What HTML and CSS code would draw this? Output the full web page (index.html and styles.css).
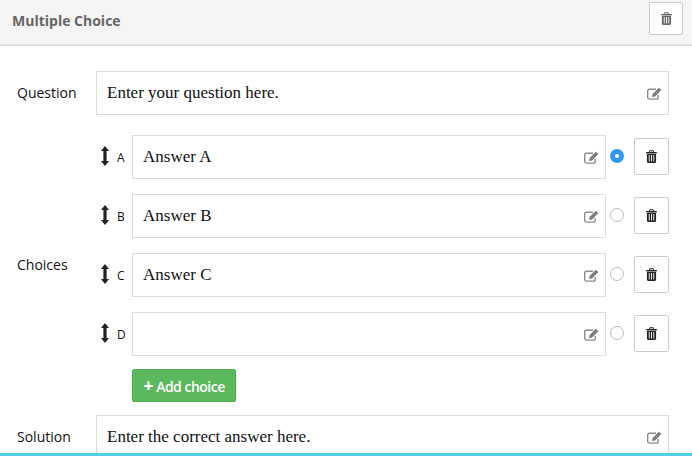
FILE: index.html
```html
<!DOCTYPE html>
<html lang="en">
<head>
    <meta charset="UTF-8">
    <meta name="viewport" content="width=device-width, initial-scale=1.0">
    <title>Multiple Choice</title>
    <link rel="stylesheet" href="styles.css">
</head>
<body>
    <svg class="icon-defs" width="0" height="0">
        <symbol id="trash" viewBox="0 0 12 14">
            <path fill-rule="evenodd" d="M4 0.3h4l0.9 1.7H11.4c0.3 0 0.6 0.2 0.6 0.6v0.9H0v-0.9c0-0.4 0.3-0.6 0.6-0.6H3.1zM4.5 1.2L4.1 2h3.8l-0.4-0.8zM1 4h10v8.4c0 0.9-0.6 1.6-1.4 1.6H2.4C1.6 14 1 13.3 1 12.4zM3 5.4v7h1v-7zM5.5 5.4v7h1v-7zM8 5.4v7h1v-7z"/>
        </symbol>
        <symbol id="edit" viewBox="0 0 15 13">
            <path fill="none" stroke="#8b8b8b" stroke-width="1.4" d="M11.2 8v2.2c0 1-0.7 1.9-1.8 1.9H2.6c-1 0-1.9-0.8-1.9-1.9V4.1c0-1 0.8-1.9 1.9-1.9H9"/>
            <path fill="#7c7c7c" d="M11.8 0.7l2.6 2.4-6.3 6.4-3.1 0.6 0.6-3z"/>
        </symbol>
        <symbol id="move" viewBox="0 0 8 20">
            <path d="M4 0l4 5H5.6v10H8l-4 5-4-5h2.4V5H0z"/>
        </symbol>
    </svg>

    <div class="panel-head">
        <span class="panel-title">Multiple Choice</span>
        <button class="icon-btn head-btn"><svg class="ico-trash"><use href="#trash"/></svg></button>
    </div>

    <div class="form">
        <div class="row">
            <label class="row-label">Question</label>
            <div class="field">
                <span>Enter your question here.</span>
                <svg class="ico-edit"><use href="#edit"/></svg>
            </div>
        </div>

        <div class="row choices-row">
            <label class="row-label choices-label">Choices</label>
            <div class="choices">
                <div class="choice">
                    <svg class="ico-move"><use href="#move"/></svg>
                    <span class="letter">A</span>
                    <div class="field">
                        <span>Answer A</span>
                        <svg class="ico-edit"><use href="#edit"/></svg>
                    </div>
                    <span class="radio checked"></span>
                    <button class="icon-btn"><svg class="ico-trash"><use href="#trash"/></svg></button>
                </div>
                <div class="choice">
                    <svg class="ico-move"><use href="#move"/></svg>
                    <span class="letter">B</span>
                    <div class="field">
                        <span>Answer B</span>
                        <svg class="ico-edit"><use href="#edit"/></svg>
                    </div>
                    <span class="radio"></span>
                    <button class="icon-btn"><svg class="ico-trash"><use href="#trash"/></svg></button>
                </div>
                <div class="choice">
                    <svg class="ico-move"><use href="#move"/></svg>
                    <span class="letter">C</span>
                    <div class="field">
                        <span>Answer C</span>
                        <svg class="ico-edit"><use href="#edit"/></svg>
                    </div>
                    <span class="radio"></span>
                    <button class="icon-btn"><svg class="ico-trash"><use href="#trash"/></svg></button>
                </div>
                <div class="choice">
                    <svg class="ico-move"><use href="#move"/></svg>
                    <span class="letter">D</span>
                    <div class="field">
                        <span></span>
                        <svg class="ico-edit"><use href="#edit"/></svg>
                    </div>
                    <span class="radio"></span>
                    <button class="icon-btn"><svg class="ico-trash"><use href="#trash"/></svg></button>
                </div>
                <button class="add-btn"><span class="plus">+</span> Add choice</button>
            </div>
        </div>

        <div class="row">
            <label class="row-label">Solution</label>
            <div class="field">
                <span>Enter the correct answer here.</span>
                <svg class="ico-edit"><use href="#edit"/></svg>
            </div>
        </div>
    </div>

    <div class="bottom-bar"></div>
</body>
</html>
```

FILE: styles.css
```css
html, body {
    height: 456px;
    overflow: hidden;
}
body {
    margin: 0;
    position: relative;
    background-color: #ffffff;
    color: #111111;
    font-family: "Open Sans", sans-serif;
    font-size: 14px;
}
.icon-defs {
    position: absolute;
}
.panel-head {
    display: flex;
    justify-content: space-between;
    align-items: flex-start;
    height: 42px;
    padding: 2px 9px 0 12px;
    background-color: #f5f5f5;
    border-bottom: 2px solid #dddddd;
}
.panel-title {
    margin-top: 9px;
    font-size: 14px;
    font-weight: 700;
    color: #666666;
}
.icon-btn {
    display: flex;
    justify-content: center;
    align-items: center;
    flex: none;
    width: 35px;
    height: 37px;
    margin-bottom: 2px;
    padding: 0;
    background-color: #ffffff;
    border: 1px solid #cccccc;
    border-radius: 2px;
    color: #222222;
}
.head-btn {
    width: 34px;
    height: 33px;
    margin-bottom: 0;
    color: #666666;
}
.ico-trash {
    width: 11px;
    height: 13px;
    fill: currentColor;
}
.ico-edit {
    flex: none;
    width: 15px;
    height: 13px;
}
.ico-move {
    flex: none;
    width: 8px;
    height: 20px;
    fill: #222222;
}
.form {
    display: flex;
    flex-direction: column;
    gap: 20px;
    padding: 25px 23px 0 17px;
}
.row {
    display: flex;
    align-items: center;
}
.choices-row {
    margin-bottom: -7px;
}
.row-label {
    flex: none;
    width: 79px;
    margin-top: -1px;
}
.choices-label {
    margin-bottom: 8px;
}
.field {
    flex: 1;
    display: flex;
    justify-content: space-between;
    align-items: center;
    height: 44px;
    box-sizing: border-box;
    padding: 0 6px 0 10px;
    border: 1px solid #dddddd;
    font-family: "Liberation Serif", serif;
    font-size: 17px;
    color: #111111;
}
.choices {
    flex: 1;
    display: flex;
    flex-direction: column;
    gap: 15px;
}
.choice {
    display: flex;
    align-items: center;
}
.choice .ico-move {
    margin: 0 0 2px 5px;
}
.letter {
    flex: none;
    width: 23px;
    padding-left: 8px;
    box-sizing: border-box;
    font-size: 12px;
}
.radio {
    flex: none;
    box-sizing: border-box;
    width: 14px;
    height: 14px;
    margin: 0 10px 2px 4px;
    border: 1px solid #bbbbbb;
    border-radius: 50%;
    background-color: #ffffff;
}
.radio.checked {
    border: 5px solid #2f97f7;
    background-color: #ffffff;
}
.add-btn {
    align-self: flex-start;
    width: 104px;
    height: 33px;
    margin: -2px 0 0 36px;
    padding: 0;
    background-color: #5cb85c;
    border: 1px solid #4cae4c;
    border-radius: 2px;
    color: #ffffff;
    font-family: "Open Sans", sans-serif;
    font-size: 14px;
    font-weight: 600;
    letter-spacing: -0.5px;
    white-space: nowrap;
}
.plus {
    font-size: 18px;
    font-weight: 700;
    line-height: 1;
}
.bottom-bar {
    position: absolute;
    left: 0;
    right: 0;
    bottom: 0;
    height: 3px;
    background-color: #4dd0e1;
}
```
